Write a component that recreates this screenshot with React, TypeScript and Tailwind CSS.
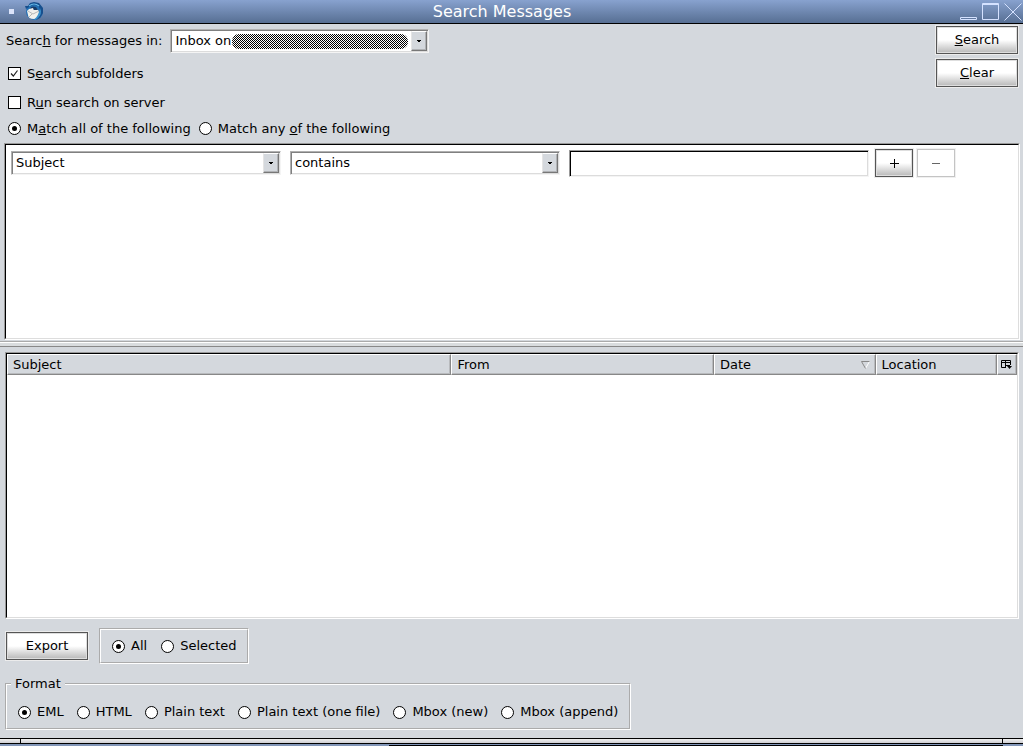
import { useState } from 'react';
import type { ReactNode } from 'react';

const formats = ['EML', 'HTML', 'Plain text', 'Plain text (one file)', 'Mbox (new)', 'Mbox (append)'];

const columns = [
  { name: 'Subject', width: 'w-[44%]' },
  { name: 'From', width: 'w-[26%]' },
  { name: 'Date', width: 'w-[16%]' },
  { name: 'Location', width: 'w-[12%]' },
];

const bevelButton =
  'flex h-7 items-center justify-center border border-[#555] bg-linear-to-b from-white from-50% to-[#b8b8b8] shadow-[0_0_0_1px_#ececec,inset_0_0_0_1px_#dedede]';

const Radio = ({ name, label, checked, onChange }: { name: string; label: ReactNode; checked: boolean; onChange: () => void }) => (
  <label className="flex items-center gap-[6px] whitespace-nowrap">
    <input
      type="radio"
      name={name}
      checked={checked}
      onChange={onChange}
      className="grid size-[13px] shrink-0 appearance-none place-items-center rounded-full border border-black bg-white checked:before:size-[5px] checked:before:rounded-full checked:before:bg-black"
    />
    {label}
  </label>
);

const Check = ({ label, defaultChecked }: { label: ReactNode; defaultChecked?: boolean }) => (
  <label className="flex items-center gap-[6px]">
    <span className="relative flex">
      <input type="checkbox" defaultChecked={defaultChecked} className="peer size-[13px] appearance-none border border-black bg-white" />
      <svg viewBox="0 0 13 13" className="pointer-events-none absolute inset-0 hidden size-[13px] peer-checked:block">
        <path d="M3 6.5 L5.3 9 L9.5 3.5" fill="none" stroke="#222" strokeWidth="1.2" />
      </svg>
    </span>
    {label}
  </label>
);

const Combo = ({ id, label, options, children }: { id: string; label?: string; options: string[]; children?: ReactNode }) => (
  <div className="relative flex h-6 border border-t-[#b0b0b0] border-r-[#f4f4f4] border-b-[#f4f4f4] border-l-[#b0b0b0] bg-white p-px shadow-[inset_1px_1px_#808080,inset_-1px_-1px_#dcdcdc]">
    <select id={id} aria-label={label} className="min-w-0 flex-1 appearance-none bg-transparent pl-[3px] outline-none">
      {options.map((option) => (
        <option key={option}>{option}</option>
      ))}
    </select>
    {children}
    <span className="pointer-events-none flex w-4 items-center justify-center border border-t-white border-r-[#777] border-b-[#777] border-l-[#e4e4e4] bg-[#d4d8dd] shadow-[inset_-1px_-1px_#b0b2b5]">
      <svg viewBox="0 0 5 3" className="h-[3px] w-[5px]">
        <path d="M0 0H4V1H3V2H2V3H2V2H1V1H0Z" />
      </svg>
    </span>
  </div>
);

const MailIcon = () => (
  <svg viewBox="0 0 19 19" className="size-[19px]">
    <circle cx="9.5" cy="9.5" r="8.5" fill="#2370b4" />
    <path d="M1 7 L0 4 L3 4 L5 1 L9 0 L14 1 L18 6 L18 11 L15 16 L11 18 Q17 11 14 5 Q9 1 4 5Z" fill="#174f8d" />
    <path d="M4 4 Q9 0 14 4" fill="none" stroke="#65b9e8" strokeWidth="1.2" />
    <path d="M2 9 Q4 6 8 7 L11 6 L13 8 L15 11 Q15 16 9 17 Q3 17 3 13Z" fill="#f1f1ec" />
    <path d="M3 9 L8 12 L14 9 M4 15 L7 12" fill="none" stroke="#a5a7a8" strokeWidth="0.8" />
    <path d="M6 5 Q8 4 11 5 L13 8 L9 8 L5 7Z" fill="#173c69" />
    <path d="M4 7 L8 6 L9 9 L5 10Z" fill="#eee" />
    <path d="M15 6 Q18 12 12 17 L9 18 Q14 13 15 6" fill="#3a91cc" />
  </svg>
);

const TitleBar = () => (
  <header className="flex h-6 items-center border-b border-black bg-linear-to-b from-[#88a2cf] to-[#576f93] text-white">
    <div className="flex items-center gap-[11px] pl-[9px]">
      <span className="size-[5px] bg-[#dbe4fa]" />
      <MailIcon />
    </div>
    <h1 className="flex-1 text-center text-[16px] leading-[22px]">Search Messages</h1>
    <div className="flex justify-end gap-[4px] pr-px">
      <button aria-label="Minimize">
        <svg viewBox="0 0 18 18" className="size-[18px]" fill="none" stroke="#d5e2ff">
          <path d="M.5 14.5H16.5V16.5H.5Z" />
        </svg>
      </button>
      <button aria-label="Maximize">
        <svg viewBox="0 0 18 18" className="size-[18px]" fill="none" stroke="#d5e2ff">
          <path d="M.5 .5H16.5V16.5H.5ZM.5 1.5H16.5" />
        </svg>
      </button>
      <button aria-label="Close">
        <svg viewBox="0 0 18 18" className="size-[18px]" fill="none" stroke="#d5e2ff">
          <path d="M.5 .5L17.5 17.5M17.5 .5L.5 17.5" />
        </svg>
      </button>
    </div>
  </header>
);

const App = () => {
  const [match, setMatch] = useState('all');
  const [scope, setScope] = useState('all');
  const [format, setFormat] = useState('EML');

  return (
    <div className="flex min-h-screen flex-col bg-[#d4d8dd] font-['DejaVu_Sans',sans-serif] text-[13px] leading-4 text-black">
      <TitleBar />

      {/* Search scope */}
      <section className="flex justify-between pr-[5px] pb-[2px]">
        <div>
          <div className="flex h-[34px] items-center gap-2 pl-[6px]">
            <label htmlFor="folder">Searc<u>h</u> for messages in:</label>
            <div className="w-[259px]">
              <Combo id="folder" options={['Inbox on']}>
                {/* account name is hidden */}
                <svg className="pointer-events-none absolute top-[4px] right-5 h-[15px] w-[176px]">
                  <defs>
                    <pattern id="dots" width="2" height="2" patternUnits="userSpaceOnUse">
                      <path d="M0 0H1V1H0ZM1 1H2V2H1Z" shapeRendering="crispEdges" />
                    </pattern>
                  </defs>
                  <rect width="176" height="15" rx="7" fill="url(#dots)" />
                </svg>
              </Combo>
            </div>
          </div>
          <div className="flex h-[31px] items-center pl-2">
            <Check defaultChecked label={<span>S<u>e</u>arch subfolders</span>} />
          </div>
          <div className="flex h-[27px] items-center pl-2">
            <Check label={<span>R<u>u</u>n search on server</span>} />
          </div>
          <div className="flex h-[25px] items-center gap-2 pl-2">
            <Radio name="match" checked={match === 'all'} onChange={() => setMatch('all')} label={<span>M<u>a</u>tch all of the following</span>} />
            <Radio name="match" checked={match === 'any'} onChange={() => setMatch('any')} label={<span>Match any <u>o</u>f the following</span>} />
          </div>
        </div>
        <div className="flex flex-col gap-[5px] pt-[2px]">
          <button className={`${bevelButton} w-[82px]`}><u>S</u>earch</button>
          <button className={`${bevelButton} w-[82px]`}><u>C</u>lear</button>
        </div>
      </section>

      {/* Search terms */}
      <section className="mr-[3px] ml-[4px] h-[197px] border border-t-[#999] border-r-white border-b-white border-l-[#999]">
        <div className="h-full border border-t-black border-r-[#ddd] border-b-[#ddd] border-l-black bg-white pt-[4px] pr-[63px] pl-[5px]">
          <div className="flex items-center gap-[6px]">
            <div className="grid flex-1 grid-cols-[9fr_9fr_10fr] items-center gap-[9px]">
              <Combo id="field" label="Field" options={['Subject', 'From', 'Body', 'Date']} />
              <Combo id="operator" label="Operator" options={['contains', "doesn't contain", 'is', "isn't"]} />
              <input
                aria-label="Value"
                className="h-[27px] min-w-0 border border-t-[#999] border-r-[#f4f4f4] border-b-[#f4f4f4] border-l-[#999] bg-white px-1 shadow-[inset_1px_1px_black,inset_-1px_-1px_#dcdcdc] outline-none"
              />
            </div>
            <div className="flex gap-[4px]">
              <button aria-label="Add" className={`${bevelButton} w-[38px]`}>
                <svg viewBox="0 0 9 9" className="size-[9px]" stroke="black">
                  <path d="M0 4.5H9M4.5 0V9" />
                </svg>
              </button>
              <button aria-label="Remove" disabled className="flex h-7 w-[38px] items-center justify-center border border-[#c4c4c4] bg-white shadow-[0_0_0_1px_#f0f0f0]">
                <svg viewBox="0 0 9 9" className="size-[9px]" stroke="#666">
                  <path d="M0 4.5H8" />
                </svg>
              </button>
            </div>
          </div>
        </div>
      </section>

      <div className="mt-px h-[6px] border-t border-b border-t-[#aaa] border-b-[#888] bg-[#d9dcde] shadow-[inset_0_1px_white]" />

      {/* Results */}
      <section className="mt-[5px] mr-[4px] ml-[5px] flex flex-1 flex-col border border-t-[#999] border-r-white border-b-white border-l-[#999]">
        <div className="flex-1 border border-t-black border-r-[#ddd] border-b-[#ddd] border-l-black bg-white">
          <table className="w-full table-fixed border-separate border-spacing-0">
            <thead>
              <tr>
                {columns.map((column) => (
                  <th
                    key={column.name}
                    className={`${column.width} h-[21px] border border-t-white border-r-[#888] border-b-[#888] border-l-white bg-[#d4d8dd] px-[5px] py-0 text-left font-normal shadow-[inset_-1px_-1px_#b8babd]`}
                  >
                    <span className="flex items-center justify-between">
                      {column.name}
                      {column.name === 'Date' && (
                        <svg viewBox="0 0 9 8" className="h-2 w-[9px]" fill="none">
                          <path d="M8.5 .5L4.5 7.5" stroke="white" />
                          <path d="M8.5 .5H.5L4.5 7.5" stroke="#888" />
                        </svg>
                      )}
                    </span>
                  </th>
                ))}
                <th className="h-[21px] border border-t-white border-r-[#888] border-b-[#888] border-l-white bg-[#d4d8dd] p-0 shadow-[inset_-1px_-1px_#b8babd]">
                  <button aria-label="Choose columns" className="flex w-full justify-center">
                    <svg viewBox="0 0 11 10" className="h-[10px] w-[11px]">
                      <path d="M.5 .5H9.5V5M.5 .5V7.5H5M.5 2.5H9.5M4.5 .5V7.5M4 5.5H9" fill="none" stroke="black" />
                      <path d="M6 6H11L8.5 9Z" />
                    </svg>
                  </button>
                </th>
              </tr>
            </thead>
          </table>
        </div>
      </section>

      {/* Export */}
      <section className="px-[5px] pt-[9px] pb-[8px]">
        <div className="flex items-center gap-[11px] pl-px">
          <button className={`${bevelButton} w-[82px]`}>Export</button>
          <div className="flex h-9 items-center gap-[14px] border-2 border-white px-[11px] [border-style:groove]">
            <Radio name="scope" checked={scope === 'all'} onChange={() => setScope('all')} label="All" />
            <Radio name="scope" checked={scope === 'selected'} onChange={() => setScope('selected')} label="Selected" />
          </div>
        </div>
        <fieldset className="mt-3 w-fit border-2 border-white px-[11px] pb-2 [border-style:groove]">
          <legend className="-ml-[7px] px-[4px]">Format</legend>
          <div className="flex gap-[13px] pt-[12px]">
            {formats.map((name) => (
              <Radio key={name} name="format" checked={format === name} onChange={() => setFormat(name)} label={name} />
            ))}
          </div>
        </fieldset>
      </section>

      {/* Window resize border */}
      <footer className="bg-black pt-px">
        <div className="flex h-[4px] justify-between bg-linear-to-b from-[#f0f0f0] to-[#cfcfd3] px-5">
          <span className="w-px bg-black" />
          <span className="w-px bg-black" />
        </div>
        <div className="mt-px h-px bg-[#8296b8]" />
        <div className="flex h-px bg-[#8296b8]">
          <span className="ml-[38%] w-[60%] bg-black" />
        </div>
      </footer>
    </div>
  );
};

export default App;
